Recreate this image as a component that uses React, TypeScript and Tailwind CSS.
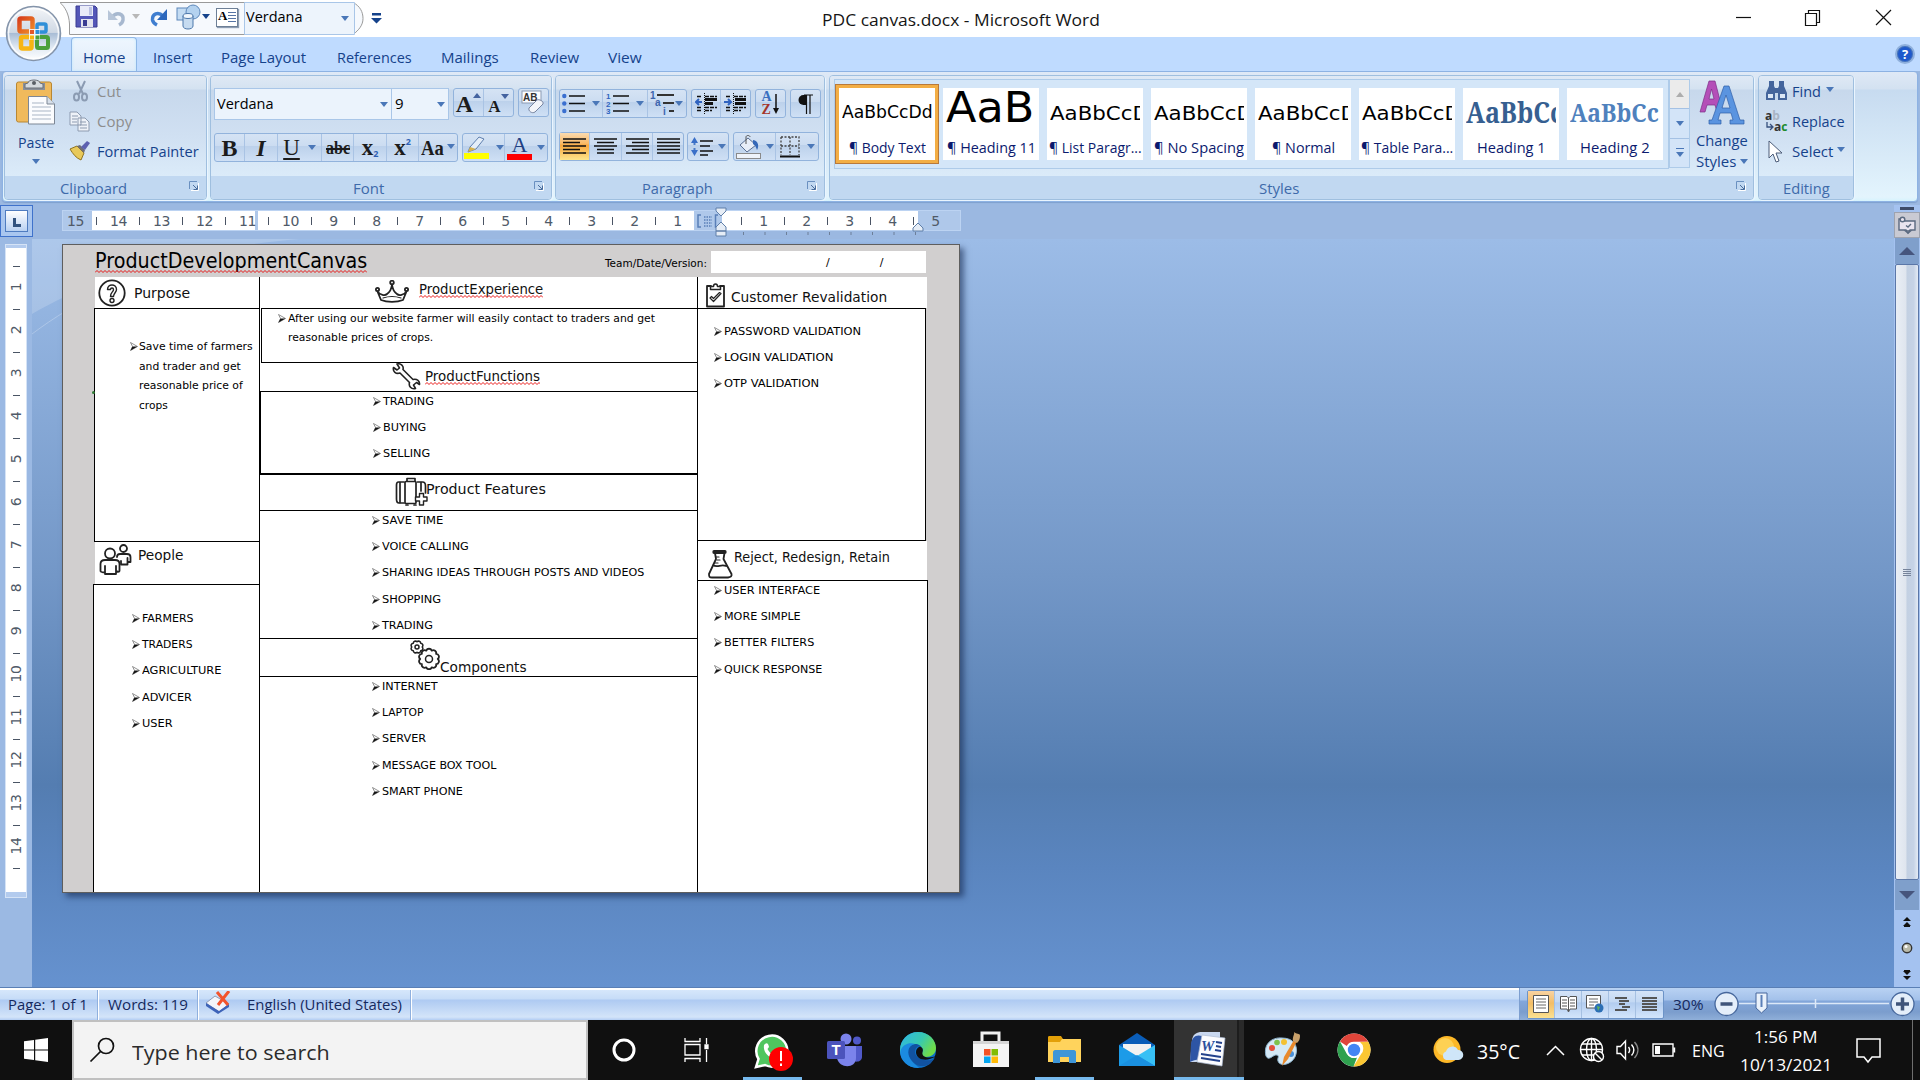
import { useLayoutEffect, useRef, useState, type ReactNode } from "react";
import clsx from "clsx";

/* Single line of text condensed or widened to an exact width. */
function Fit({ w, children, className }: { w: number; children: ReactNode; className?: string }) {
  const ref = useRef<HTMLSpanElement>(null);
  const [s, setS] = useState(1);
  useLayoutEffect(() => {
    const el = ref.current;
    if (el && el.offsetWidth > 0) setS(w / el.offsetWidth);
  }, [w]);
  return (
    <span className={clsx("inline-block shrink-0 whitespace-nowrap text-left", className)} style={{ width: w }}>
      <span ref={ref} className="inline-block origin-left" style={{ transform: `scaleX(${s})` }}>
        {children}
      </span>
    </span>
  );
}

function Caret({ className, color = "#4a77b8" }: { className?: string; color?: string }) {
  return (
    <svg className={clsx("shrink-0", className)} width="8" height="5" viewBox="0 0 8 5">
      <path d="M0 0H8L4 5Z" fill={color} />
    </svg>
  );
}

/* ---------- Title bar ---------- */

function OfficeButton() {
  return (
    <svg className="absolute left-[5px] top-[5px] z-20" width="58" height="58" viewBox="0 0 58 58">
      <defs>
        <linearGradient id="orb" x1="0" y1="0" x2="0" y2="1">
          <stop offset="0" stopColor="#f4f6f9" />
          <stop offset=".48" stopColor="#cfd8e4" />
          <stop offset=".5" stopColor="#a9bdd6" />
          <stop offset=".75" stopColor="#dfe8f2" />
          <stop offset="1" stopColor="#ffffff" />
        </linearGradient>
        <linearGradient id="og" x1="0" y1="0" x2="1" y2="1">
          <stop offset="0" stopColor="#d8401c" />
          <stop offset="1" stopColor="#f08a28" />
        </linearGradient>
      </defs>
      <circle cx="28.500" cy="28.500" r="27" fill="url(#orb)" stroke="#8494aa" strokeWidth="1.500" />
      <circle cx="28.500" cy="28.500" r="25" fill="none" stroke="#fff" strokeWidth="1.500" opacity=".8" />
      <rect x="14.500" y="13.500" width="13" height="13" rx="1.500" fill="none" stroke="url(#og)" strokeWidth="4.500" />
      <rect x="32" y="19" width="9" height="8" rx="1.500" fill="none" stroke="#2f8fd8" strokeWidth="3.500" />
      <rect x="16" y="32" width="10.500" height="11.500" rx="1.500" fill="none" stroke="#f7b512" strokeWidth="4.500" />
      <rect x="32" y="32" width="11" height="11" rx="1.500" fill="none" stroke="#4ba03c" strokeWidth="4" />
      <path d="M24 24H35V35H24Z" fill="#fff" opacity=".85" />
      <path d="M25 25h4v4h-4z" fill="#e4572a" />
      <path d="M30.500 25h4v4h-4z" fill="#2f8fd8" />
      <path d="M25 30.500h4v4h-4z" fill="#f7b512" />
      <path d="M30.500 30.500h4v4h-4z" fill="#4ba03c" />
    </svg>
  );
}

function TitleBar() {
  return (
    <div className="relative flex h-[37px] bg-white">
      <svg className="absolute left-[59px] top-[2px]" width="306" height="33" viewBox="0 0 306 33">
        <path d="M1 .500H294C301 4 304 10 304 16.500S300 28 294 32.500H10.500V22C10 12 6 5 1 .500Z" fill="#f6f9fd" stroke="#9a9a9a" />
        <path d="M185.500 .500H295.500V32.500H185.500Z" fill="#edf4fc" stroke="#a9c6e8" />
      </svg>
      <div className="relative flex w-[390px] shrink-0 items-start pl-[75px]">
        <svg className="mt-[5px]" width="23" height="23" viewBox="0 0 23 23">
          <path d="M1 1H20L22 3V22H1Z" fill="#5457b8" stroke="#3a3c92" />
          <path d="M5 1H18V11H5Z" fill="#e9ebf8" />
          <path d="M14 2h3v8h-3z" fill="#b9bfe3" />
          <path d="M6 14H18V22H6Z" fill="#e3e4ee" />
          <path d="M8 15h4v6H8z" fill="#3a3c92" />
        </svg>
        <svg className="ml-[9px] mt-[8px]" width="20" height="19" viewBox="0 0 20 19">
          <path d="M5 9C10 3 17 6 16 12C15.500 15 14 16 12 17" fill="none" stroke="#a7b8cf" strokeWidth="3.500" />
          <path d="M1 2V12H11Z" fill="#b7c5d8" />
        </svg>
        <Caret className="ml-[5px] mt-[14px]" color="#b8b8b8" />
        <svg className="ml-[9px] mt-[8px]" width="20" height="19" viewBox="0 0 20 19">
          <path d="M14 8C9 3 3 6 3.500 12C4 15 6 16 8 17" fill="none" stroke="#3f7ed0" strokeWidth="3.500" />
          <path d="M18 1V12H8Z" fill="#2d68bd" />
        </svg>
        <svg className="ml-[7px] mt-[4px]" width="26" height="26" viewBox="0 0 26 26">
          <rect x="1" y="4" width="13" height="12" fill="#c4dcf3" stroke="#5d88bb" />
          <circle cx="17" cy="8" r="7" fill="#b4d2ef" stroke="#5d88bb" />
          <path d="M7 12V22C7 26 17 26 17 22V12Z" fill="#c6dbf0" stroke="#4d78ab" />
          <ellipse cx="12" cy="12" rx="5" ry="2.500" fill="#f1f7fd" stroke="#4d78ab" />
        </svg>
        <Caret className="ml-0 mt-[14px]" color="#15428b" />
        <div className="ml-[6px] mt-[8px] flex h-[19px] w-[22px] border border-[#6d7f96] bg-white shadow-[1px_1px_1px_#8d9db3]">
          <span className="w-[10px] pl-[1px] font-['Liberation_Serif'] text-[13px] font-bold leading-[13px]">A</span>
          <span className="flex flex-1 flex-col gap-[2px] px-[1px] pt-[3px]">
            {[0, 1, 2, 3].map((i) => (
              <i key={i} className="h-px bg-[#5574a5]" />
            ))}
          </span>
        </div>
        <Fit w={57} className="ml-[8px] mt-[6px] text-[15px] leading-[20px] text-black">Verdana</Fit>
        <Caret className="ml-[38px] mt-[16px]" />
        <svg className="ml-[22px] mt-[12px]" width="11" height="12" viewBox="0 0 11 12">
          <path d="M1 1H10V3.500H1ZM0 6H11L5.500 11.500Z" fill="#15428b" />
        </svg>
      </div>
      <Fit w={278} className="ml-[432px] mt-[7px] text-[17px] leading-[25px] text-[#151515]">PDC canvas.docx - Microsoft Word</Fit>
      <svg className="ml-auto mr-[28px] mt-[9px] shrink-0" width="157" height="17" viewBox="0 0 157 17" fill="none" stroke="#111" strokeWidth="1.200">
        <path d="M1 8.500H16" />
        <path d="M70.500 4.500H81.500V16.500H70.500ZM73.500 4V1.500H84.500V13.500H82" />
        <path d="M141 1L156 16M156 1L141 16" />
      </svg>
    </div>
  );
}

function Tabs() {
  const tab = "mt-[9px] text-[15px] leading-[22px] text-[#15428b]";
  return (
    <div className="flex h-[34px] bg-[#bfdbff]">
      <div className="ml-[71px] h-[34px] w-[66px] rounded-t-[4px] border border-b-0 border-[#8fb7e6] bg-gradient-to-b from-[#eef6fe] to-[#e0ecf9] pl-[11px] shadow-[inset_0_0_3px_#bfe8ff]">
        <Fit w={42} className="mt-[8px] text-[15px] leading-[22px] text-[#15428b]">Home</Fit>
      </div>
      <Fit w={39} className={clsx(tab, "ml-[16px]")}>Insert</Fit>
      <Fit w={85} className={clsx(tab, "ml-[29px]")}>Page Layout</Fit>
      <Fit w={75} className={clsx(tab, "ml-[31px]")}>References</Fit>
      <Fit w={58} className={clsx(tab, "ml-[29px]")}>Mailings</Fit>
      <Fit w={49} className={clsx(tab, "ml-[31px]")}>Review</Fit>
      <Fit w={34} className={clsx(tab, "ml-[29px]")}>View</Fit>
      <span className="ml-auto mr-[5px] mt-[7px] flex h-[20px] w-[20px] items-center justify-center rounded-full border-2 border-[#8fb0dc] bg-[#1f59cc] text-[13px] font-bold leading-none text-white ring-1 ring-[#4774b8] ring-inset">?</span>
    </div>
  );
}

/* ---------- Ribbon ---------- */

function Launcher({ className }: { className?: string }) {
  return (
    <svg className={className} width="10" height="10" viewBox="0 0 10 10" fill="none" stroke="#6a90c0">
      <path d="M.500 8V.500H8" />
      <path d="M4 4L8 8M8.500 4.500V8.500H4.500" stroke="#4a6d9c" />
      <path d="M9.500 2V9.500H2" stroke="#fff" />
    </svg>
  );
}

function Group({ title, tw, width, children, launcher }: { title: string; tw: number; width: string; children: ReactNode; launcher?: boolean }) {
  return (
    <section className={clsx("flex h-[125px] shrink-0 flex-col overflow-hidden rounded-[4px] border border-[#9fbfdf] shadow-[1px_1px_0_#eaf5ff]", width)}>
      <div className="h-[100px] bg-[linear-gradient(180deg,#dfe9f5_0,#d4e2f1_13px,#c7d8ec_14px,#d0e0f2_60px,#dbebf9_100px)]">{children}</div>
      <div className={clsx("relative flex h-[23px] justify-center bg-[#c1d8f1]", launcher && "pr-[25px]")}>
        <Fit w={tw} className="text-[15px] leading-[24px] text-[#3e6aaa]">{title}</Fit>
        {launcher && <Launcher className="absolute right-[7px] top-[5px]" />}
      </div>
    </section>
  );
}

const btn = "flex h-[29px] rounded-[3px] border border-[#92b3dc] bg-[linear-gradient(180deg,#d5e3f4_0,#cbdcf1_45%,#bcd1eb_46%,#cfe0f5_100%)] divide-x divide-[#a9c3e4]";

function Cell({ w, on, children, className }: { w: string; on?: boolean; children: ReactNode; className?: string }) {
  return (
    <div className={clsx("flex h-full shrink-0 items-center justify-center", w, on && "bg-[linear-gradient(180deg,#fbdbb0_0,#f9b863_40%,#f9a83e_45%,#fde68c_100%)]", className)}>
      {children}
    </div>
  );
}

function Clipboard() {
  return (
    <Group title="Clipboard" tw={67} width="w-[203px]" launcher>
      <div className="flex">
        <div className="flex w-[62px] flex-col items-center pt-[3px]">
          <svg width="42" height="46" viewBox="0 0 42 46">
            <rect x="1.500" y="3" width="35" height="40" rx="2" fill="#f0ba5c" stroke="#b98732" />
            <path d="M8 4H30V11H8Z" fill="#8a8f98" />
            <path d="M13 4C13 0 25 0 25 4L28 5V9H10V5Z" fill="#d6dade" stroke="#6b7078" />
            <circle cx="19" cy="4" r="2" fill="#5a5f66" />
            <path d="M13.500 17.500H32L39.500 25V45H13.500Z" fill="#fbfcfe" stroke="#7d8795" />
            <path d="M32 17.500V25H39.500" fill="#d7dfe9" stroke="#7d8795" />
            <path d="M17 24H29M17 28H36M17 32H36M17 36H36M17 40H36" stroke="#a9b5c5" />
          </svg>
          <Fit w={36} className="mt-[6px] text-[15px] leading-[22px] text-[#15428b]">Paste</Fit>
          <Caret className="mt-[6px]" />
        </div>
        <div className="flex flex-col pl-[2px]">
          <div className="flex h-[30px] items-center">
            <svg className="ml-[3px] mr-[7px]" width="18" height="22" viewBox="0 0 18 22" fill="none" stroke="#8b9bb2" strokeWidth="2">
              <path d="M5 1L11 14M13 1L7 14" />
              <ellipse cx="4.500" cy="17" rx="2.500" ry="3.500" />
              <ellipse cx="12.500" cy="17" rx="2.500" ry="3.500" />
            </svg>
            <Fit w={24} className="text-[15px] leading-[22px] text-[#8d8d8d]">Cut</Fit>
          </div>
          <div className="flex h-[30px] items-center">
            <svg className="mr-[6px]" width="22" height="21" viewBox="0 0 22 21" fill="#eef2f8" stroke="#8d9bb0">
              <path d="M1 1H8L12 5V14H1ZM9 7H16L20 11V20H9Z" />
              <path d="M3 5H9M3 8H8M3 11H8M11 11H17M11 14H18M11 17H18" />
            </svg>
            <Fit w={35} className="text-[15px] leading-[22px] text-[#8d8d8d]">Copy</Fit>
          </div>
          <div className="flex h-[30px] items-center">
            <svg className="mr-[6px]" width="22" height="20" viewBox="0 0 22 20">
              <path d="M1 8L8 5L15 12L12 19C7 17 4 13 1 8Z" fill="#e8c95a" stroke="#8f7320" />
              <path d="M8 5L11 4L16 9L15 12Z" fill="#6f6f78" />
              <path d="M12 6L18 0L21 2L16 9Z" fill="#5d61b0" />
            </svg>
            <Fit w={102} className="text-[15px] leading-[22px] text-[#15428b]">Format Painter</Fit>
          </div>
        </div>
      </div>
    </Group>
  );
}

const serif = "font-['Liberation_Serif',serif] text-[#1c1c1c]";

function FontGroup() {
  return (
    <Group title="Font" tw={31} width="w-[342px]" launcher>
      <div className="flex pl-[3px] pt-[12px]">
        <div className="flex h-[32px] w-[178px] items-center border border-[#a9c6e8] bg-[#ebf3fc] pb-[2px]">
          <Fit w={57} className="ml-[2px] text-[15px] leading-[28px] text-black">Verdana</Fit>
          <Caret className="ml-auto mr-[3px] mt-[2px]" />
        </div>
        <div className="flex h-[32px] w-[57px] items-center border border-l-0 border-[#a9c6e8] bg-[#ebf3fc] pb-[2px]">
          <span className="ml-[3px] text-[15px] leading-[28px] text-black">9</span>
          <Caret className="ml-auto mr-[3px] mt-[2px]" />
        </div>
        <div className={clsx(btn, "ml-[4px]")}>
          <Cell w="w-[30px]">
            <span className={clsx(serif, "pt-[3px] text-[24px] font-bold leading-none")}>A</span>
            <svg className="mb-[14px]" width="8" height="5"><path d="M0 5H8L4 0Z" fill="#4463a0" /></svg>
          </Cell>
          <Cell w="w-[29px]">
            <span className={clsx(serif, "pt-[7px] text-[17px] font-bold leading-none")}>A</span>
            <Caret className="mb-[13px]" color="#4463a0" />
          </Cell>
        </div>
        <div className={clsx(btn, "ml-[4px]")}>
          <Cell w="w-[29px]">
            <svg width="25" height="25" viewBox="0 0 25 25">
              <rect x="1" y="1" width="19" height="12" fill="#fafcff" stroke="#8c9bb3" />
              <text x="2" y="11" fontSize="10" fontWeight="bold" fontFamily="Liberation Sans" fill="#333">AB</text>
              <path d="M8 18L16 10C18 9 23 11 22 14L14 22C11 24 7 21 8 18Z" fill="#f3f5fa" stroke="#7784a0" />
            </svg>
          </Cell>
        </div>
      </div>
      <div className="flex pl-[3px] pt-[13px]">
        <div className={btn}>
          <Cell w="w-[30px]"><span className={clsx(serif, "text-[24px] font-bold leading-none")}>B</span></Cell>
          <Cell w="w-[33px]"><span className={clsx(serif, "text-[24px] font-bold italic leading-none")}>I</span></Cell>
          <Cell w="w-[44px]">
            <span className={clsx(serif, "mr-[8px] text-[23px] leading-none underline underline-offset-[3px]")}>U</span>
            <Caret />
          </Cell>
          <Cell w="w-[32px]"><Fit w={24} className={clsx(serif, "text-[18px] font-bold leading-none [&>span]:line-through [&>span]:decoration-2")}>abc</Fit></Cell>
          <Cell w="w-[33px]">
            <span className={clsx(serif, "text-[23px] font-bold leading-none")}>x</span>
            <span className="mt-[12px] text-[9px] font-bold leading-none text-[#2d5fb3]">2</span>
          </Cell>
          <Cell w="w-[32px]">
            <span className={clsx(serif, "text-[23px] font-bold leading-none")}>x</span>
            <span className="mb-[13px] text-[9px] font-bold leading-none text-[#2d5fb3]">2</span>
          </Cell>
          <Cell w="w-[38px]">
            <Fit w={23} className={clsx(serif, "mr-[3px] pt-[1px] text-[21px] font-bold leading-none")}>Aa</Fit>
            <Caret className="mb-[2px]" />
          </Cell>
        </div>
        <div className={clsx(btn, "ml-[4px]")}>
          <Cell w="w-[42px]">
            <svg className="mr-[7px]" width="25" height="25" viewBox="0 0 25 25">
              <path d="M6 12L15 2L20 4L12 14L4 17Z" fill="#e4edf8" stroke="#5e7fae" />
              <path d="M4 17L6 12L12 14Z" fill="#d6b14c" />
              <rect y="18" width="25" height="6" fill="#ff0" />
            </svg>
            <Caret />
          </Cell>
          <Cell w="w-[42px]">
            <span className="mr-[5px] flex w-[25px] flex-col items-center">
              <span className="font-['Liberation_Serif'] text-[22px] leading-[19px] text-[#1f3f82]">A</span>
              <span className="h-[6px] w-[25px] bg-[#f00]" />
            </span>
            <Caret />
          </Cell>
        </div>
      </div>
    </Group>
  );
}

function AlignIcon({ d }: { d: string }) {
  return (
    <svg width="23" height="19" viewBox="0 0 23 19" stroke="#111" strokeWidth="1.400">
      <path d={d} />
    </svg>
  );
}

function IndentIcon({ left }: { left?: boolean }) {
  return (
    <svg width="23" height="21" viewBox="0 0 23 21">
      <path d="M2 3.500H7M10 3.500H22M2 14.500H7M2 17.500H7M10 14.500H22M10 17.500H17" stroke="#111" strokeWidth="1.500" strokeDasharray="4 1" />
      <path d={left ? "M10 5H22V8H10ZM10 9H18V12H10Z" : "M11 5H22V8H11ZM11 9H22V12H11Z"} fill="#111" />
      <path d={left ? "M7 9H2M4 6L1 9L4 12" : "M0 9H6M4 6L7 9L4 12"} stroke="#2f63c0" strokeWidth="2" fill="none" />
      <path d="M9.500 0V21" stroke="#111" strokeDasharray="1 1" />
    </svg>
  );
}

function ParagraphGroup() {
  return (
    <Group title="Paragraph" tw={71} width="w-[270px]" launcher>
      <div className="flex pl-[3px] pt-[13px]">
        <div className={btn}>
          <Cell w="w-[43px]">
            <svg className="mr-[7px]" width="23" height="21" viewBox="0 0 23 21">
              <path d="M7 3H23M7 10.500H23M7 18H23" stroke="#111" strokeWidth="1.400" />
              <circle cx="2.300" cy="3" r="2.200" fill="#3a6fd0" /><circle cx="2.300" cy="10.500" r="2.200" fill="#3a6fd0" /><circle cx="2.300" cy="18" r="2.200" fill="#3a6fd0" />
            </svg>
            <Caret />
          </Cell>
          <Cell w="w-[45px]">
            <svg className="mr-[7px]" width="23" height="23" viewBox="0 0 23 23">
              <path d="M7 4H23M7 11.500H23M7 19H23" stroke="#111" strokeWidth="1.400" />
              <g fontFamily="Liberation Sans" fontWeight="bold" fontSize="8" fill="#2f63c0">
                <text x="0" y="7">1</text><text x="0" y="14.500">2</text><text x="0" y="22">3</text>
              </g>
            </svg>
            <Caret />
          </Cell>
          <Cell w="w-[38px]">
            <svg width="25" height="25" viewBox="0 0 25 25">
              <path d="M7 4H24M13 12H24M19 20H24" stroke="#333" strokeWidth="2" />
              <g fontFamily="Liberation Sans" fontWeight="bold" fontSize="10" fill="#3c64ae">
                <text x="0" y="8">1</text><text x="5" y="15">a</text><text x="13" y="24">i</text>
              </g>
            </svg>
            <Caret className="mr-[2px]" />
          </Cell>
        </div>
        <div className={clsx(btn, "ml-[4px]")}>
          <Cell w="w-[29px]"><IndentIcon left /></Cell>
          <Cell w="w-[29px]"><IndentIcon /></Cell>
        </div>
        <div className={clsx(btn, "ml-[4px]")}>
          <Cell w="w-[29px]">
            <span className="flex flex-col font-['Liberation_Serif'] text-[14px] font-bold leading-[12.500px]">
              <span className="text-[#3a6fc0]">A</span>
              <span className="text-[#a5352a]">Z</span>
            </span>
            <svg width="8" height="22" viewBox="0 0 8 22"><path d="M4 1V16" stroke="#111" strokeWidth="1.500" /><path d="M1 15H7L4 21Z" fill="#111" /></svg>
          </Cell>
        </div>
        <div className={clsx(btn, "ml-[4px]")}>
          <Cell w="w-[29px]">
            <svg width="15" height="20" viewBox="0 0 15 20"><path d="M9 1H5.500A5 5 0 0 0 5.500 11H8Z" fill="#111" /><path d="M8.500 1V20M12 1V20M6 1H15" stroke="#111" strokeWidth="1.200" /></svg>
          </Cell>
        </div>
      </div>
      <div className="flex pl-[3px] pt-[14px]">
        <div className={btn}>
          <Cell w="w-[30px]" on><AlignIcon d="M0 2H23M0 5.500H17M0 9H23M0 12.500H17M0 16H23" /></Cell>
          <Cell w="w-[32px]"><AlignIcon d="M0 2H23M3 5.500H20M0 9H23M3 12.500H20M3 16H20" /></Cell>
          <Cell w="w-[31px]"><AlignIcon d="M0 2H23M6 5.500H23M0 9H23M6 12.500H23M0 16H23" /></Cell>
          <Cell w="w-[30px]"><AlignIcon d="M0 2H23M0 5.500H23M0 9H23M0 12.500H23M0 16H23" /></Cell>
        </div>
        <div className={clsx(btn, "ml-[3px]")}>
          <Cell w="w-[40px]">
            <svg className="mr-[5px]" width="22" height="20" viewBox="0 0 22 20">
              <path d="M9 4H22M9 9H19M9 14H22M9 18H17" stroke="#111" strokeWidth="1.400" />
              <path d="M3.500 3V17" stroke="#4a7bc8" strokeWidth="2" strokeDasharray="5 3" />
              <path d="M0 6L3.500 0L7 6ZM0 13L3.500 19L7 13Z" fill="#3a6fc8" />
            </svg>
            <Caret />
          </Cell>
        </div>
        <div className={clsx(btn, "ml-[4px]")}>
          <Cell w="w-[42px]">
            <svg className="mr-[5px]" width="25" height="24" viewBox="0 0 25 24">
              <path d="M4 10L12 3L20 10L11 17Z" fill="#e8eef8" stroke="#5a6f92" />
              <path d="M10 9V2C10 0 14 0 14 2" fill="none" stroke="#555" />
              <path d="M17 5C23 6 23 12 21 15C20 12 19 10 17 9Z" fill="#3568b8" />
              <rect x=".500" y="18.500" width="24" height="5" fill="#eef3fa" stroke="#8a8a8a" />
            </svg>
            <Caret />
          </Cell>
          <Cell w="w-[42px]">
            <svg className="mr-[7px]" width="20" height="22" viewBox="0 0 20 22">
              <path d="M1 1H19V19M1 1V19M10 1V19M1 10H19" fill="none" stroke="#444" strokeDasharray="2 1.500" strokeWidth="1.300" />
              <path d="M0 20.500H20" stroke="#111" strokeWidth="2" />
            </svg>
            <Caret />
          </Cell>
        </div>
      </div>
    </Group>
  );
}

const dj = "font-['DejaVu_Sans',sans-serif]";
const styleItems = [
  { n: "¶ Body Text", nw: 77, s: "AaBbCcDd", sw: 91, cls: "text-[17px] leading-[48px] text-black", f: "sans", on: true },
  { n: "¶ Heading 11", nw: 89, s: "AaB", sw: 88, cls: "text-[43px] leading-[38px] text-black", f: "sans" },
  { n: "¶ List Paragr...", nw: 93, s: "AaBbCcDd", sw: 112, cls: "text-[20px] leading-[50px] text-black", f: "sans" },
  { n: "¶ No Spacing", nw: 90, s: "AaBbCcDd", sw: 112, cls: "text-[20px] leading-[50px] text-black", f: "sans" },
  { n: "¶ Normal", nw: 63, s: "AaBbCcDd", sw: 112, cls: "text-[20px] leading-[50px] text-black", f: "sans" },
  { n: "¶ Table Para...", nw: 92, s: "AaBbCcDd", sw: 112, cls: "text-[20px] leading-[50px] text-black", f: "sans" },
  { n: "Heading 1", nw: 69, s: "AaBbCc", sw: 97, cls: "text-[28px] leading-[48px] font-bold text-[#365f91]", f: "serif" },
  { n: "Heading 2", nw: 70, s: "AaBbCc", sw: 89, cls: "text-[25px] leading-[48px] font-bold text-[#4f81bd]", f: "serif" },
];

function StylesGroup() {
  return (
    <Group title="Styles" tw={40} width="w-[925px]" launcher>
      <div className="flex pt-[3px]">
        <div className="ml-[4px] flex h-[90px] w-[835px] gap-[8px] border border-[#aecbe9] bg-[#d4e6f8] pl-[4px] pt-[8px]">
          {styleItems.map((it) => (
            <div
              key={it.n}
              className={clsx(
                "flex h-[72px] w-[96px] shrink-0 flex-col items-center bg-white",
                it.on && "outline-[3px] outline-[#f3ae45] shadow-[0_0_0_4px_#b9793a]",
              )}
            >
              <div className={clsx("h-[48px] w-[90px] overflow-hidden", it.f === "serif" ? "font-['Noto_Serif','Liberation_Serif',serif]" : dj)}>
                <Fit w={it.sw} className={it.cls}>{it.s}</Fit>
              </div>
              <Fit w={it.nw} className="text-[15px] leading-[22px] text-[#0b1a6e]">{it.n}</Fit>
            </div>
          ))}
        </div>
        <div className="flex h-[89px] w-[21px] flex-col divide-y divide-[#a4c1e4] border border-[#aecbe9] bg-[#d3e4f8]">
          <span className="flex flex-1 items-center justify-center bg-[#ebebeb]"><svg width="8" height="5"><path d="M0 5H8L4 0Z" fill="#adadad" /></svg></span>
          <span className="flex flex-1 items-center justify-center"><Caret /></span>
          <span className="flex flex-1 flex-col items-center justify-center gap-[3px]"><i className="h-[1px] w-[8px] bg-[#4a77b8]" /><Caret /></span>
        </div>
        <div className="flex flex-col pl-[6px] pt-[1px]">
          <svg className="ml-[3px]" width="46" height="45" viewBox="0 0 46 45">
            <path fillRule="evenodd" d="M1 32L10 1H16L24 32H18L16 25H8L6 32ZM10 19H15L12.500 9Z" fill="#b44fb8" stroke="#7c2f86" strokeWidth=".700" />
            <path fillRule="evenodd" d="M10 44V40H13L25 6H30L41 40H45V44H31V40H34L32 33H21L19 40H22V44ZM23 28H31L27 15Z" fill="#5a94e0" stroke="#2f5fa8" strokeWidth=".700" />
          </svg>
          <Fit w={52} className="mt-[5px] text-[15px] leading-[21px] text-[#15428b]">Change</Fit>
          <span className="flex items-center">
            <Fit w={40} className="text-[15px] leading-[21px] text-[#15428b]">Styles</Fit>
            <Caret className="ml-[4px]" />
          </span>
        </div>
      </div>
    </Group>
  );
}

function EditingGroup() {
  const t = "text-[15px] leading-[22px] text-[#15428b]";
  return (
    <Group title="Editing" tw={47} width="w-[96px]">
      <div className="flex flex-col pl-[6px]">
        <div className="flex h-[30px] items-center">
          <svg className="mr-[4px]" width="23" height="22" viewBox="0 0 23 22" fill="#44659c">
            <path d="M4 1H9V6L10 8V20H1V13L4 6ZM14 1H19V6L22 13V20H13V8L14 6Z" /><path d="M9 8H14V13H9Z" /><path d="M3 14H8V18H3ZM15 14H20V18H15Z" fill="#dbe7f6" />
          </svg>
          <Fit w={29} className={t}>Find</Fit>
          <Caret className="mb-[4px] ml-[5px]" />
        </div>
        <div className="flex h-[30px] items-center">
          <span className="mr-[4px] flex w-[23px] flex-col text-[12px] font-bold leading-[11px] text-[#333]">
            <span>a<span className="text-[#a9b4c4]">b</span></span>
            <span className="flex pl-[1px]">
              <svg width="8" height="11" viewBox="0 0 8 11"><path d="M1 1V6H6M4 3L7 6L4 9" fill="none" stroke="#36507d" strokeWidth="1.300" /></svg>
              a<span className="text-[#1b8c2d]">c</span>
            </span>
          </span>
          <Fit w={53} className={t}>Replace</Fit>
        </div>
        <div className="flex h-[30px] items-center">
          <svg className="ml-[3px] mr-[7px]" width="17" height="23" viewBox="0 0 17 23"><path d="M1 1V18L5 14L8 22L11 21L8 13H14Z" fill="#fff" stroke="#4c5c78" /></svg>
          <Fit w={41} className={t}>Select</Fit>
          <Caret className="mb-[4px] ml-[4px]" />
        </div>
      </div>
    </Group>
  );
}

function Ribbon() {
  return (
    <div className="h-[134px] bg-[#9bb8e1]">
      <div className="mx-[2px] flex h-[131px] rounded-[4px] border border-[#8db2e3] bg-[linear-gradient(180deg,#dfe9f6_0,#d3e1f1_17px,#c7dbf0_18px,#e3f4fd_125px,#d3f3fd_130px)] pl-px pt-[3px] shadow-[0_1px_1px_#7fa0cf]">
        <Clipboard />
        <span className="w-[3px]" />
        <FontGroup />
        <span className="w-[3px]" />
        <ParagraphGroup />
        <span className="w-[4px]" />
        <StylesGroup />
        <span className="w-[4px]" />
        <EditingGroup />
      </div>
    </div>
  );
}

/* ---------- Rulers ---------- */

const hNums = ["15", "14", "13", "12", "11", "10", "9", "8", "7", "6", "5", "4", "3", "2", "1", "", "1", "2", "3", "4", "5"];

function HRuler() {
  return (
    <div className="flex h-[34px] bg-[#9bb8e1]">
      <div className="h-[32px] w-[33px] border border-[#3f72cb] bg-[#a9c6ef] p-[4px]">
        <div className="flex h-[22px] w-[23px] items-center justify-center border border-[#4f7cc0] bg-gradient-to-b from-white to-[#b9d1f2]">
          <span className="mt-[2px] h-[9px] w-[8px] border-b-[3px] border-l-[3px] border-[#31527f]" />
        </div>
      </div>
      <div className="relative ml-[29px] mt-[5px] flex h-[21px] w-[899px] border border-[#bcd3f2] bg-[#afc8ea]">
        <span className="w-[29px]" />
        <span className="w-[163px] bg-white" />
        <span className="w-[3px]" />
        <span className="w-[436px] bg-white" />
        <span className="flex w-[28px] items-center justify-center">
          <svg width="22" height="14" viewBox="0 0 22 14" fill="none" stroke="#5a7fb8">
            <path d="M4 1H1V13H4" strokeWidth="1.500" />
            <path d="M7 3H15M7 6H15M7 9H15M7 12H15" strokeDasharray="1.500 1" strokeWidth="1.500" />
            <path d="M21 1H18.500V13H21" strokeWidth="1.500" />
          </svg>
        </span>
        <span className="w-[196px] bg-white" />
        <div className="absolute left-[-9px] top-0 flex h-[19px] items-center">
          {hNums.map((n, i) => (
            <span key={i} className="relative flex h-[14px] w-[43px] items-center justify-center font-['DejaVu_Sans'] text-[14px] leading-none tracking-[-0.5px] text-[#505a68]">
              {n}
              {i !== 14 && i < 20 && <i className="absolute right-0 top-[3px] h-[8px] w-px bg-[#4a5464]" />}
            </span>
          ))}
        </div>
        <svg className="absolute left-[652px] top-[-4px]" width="12" height="31" viewBox="0 0 12 31" fill="#e6edf6" stroke="#5f7fa9">
          <path d="M1 1H11V4L6 9L1 4ZM1 24V20L6 15L11 20V24ZM1 24H11V29H1Z" />
        </svg>
        <svg className="absolute left-[849px] top-[11px]" width="12" height="10" viewBox="0 0 12 10" fill="#e6edf6" stroke="#5f7fa9">
          <path d="M1 9V6L6 1L11 6V9Z" />
        </svg>
        <svg className="absolute left-[680px] top-[21px]" width="175" height="3" viewBox="0 0 175 3" stroke="#6d7f99">
          <path d="M.500 0V3M22 0V3M43.500 0V3M65 0V3M86.500 0V3M108 0V3M129.500 0V3M151 0V3M172.500 0V3" />
        </svg>
      </div>
    </div>
  );
}

function VRuler() {
  return (
    <div className="flex w-[32px] shrink-0 items-start bg-[#9bb9e3] pl-[5px] pt-[5px]">
      <div className="flex h-[654px] w-[22px] flex-col border border-[#d5e3f6] bg-[#b3cbee] pb-[5px] pt-[3px]">
        <div className="flex min-h-0 flex-1 flex-col items-center overflow-hidden bg-white pt-[18px]">
          {Array.from({ length: 15 }, (_, i) => (
            <span key={i} className="flex h-[43px] w-full shrink-0 flex-col items-center">
              <i className="h-px w-[7px] shrink-0 bg-[#4a5464]" />
              {i < 14 && (
                <span className="flex h-[40px] items-center justify-center">
                  <span className="-rotate-90 font-['DejaVu_Sans'] text-[14px] leading-none tracking-[-0.5px] text-[#505a68]">{i + 1}</span>
                </span>
              )}
            </span>
          ))}
        </div>
      </div>
    </div>
  );
}

/* ---------- Document ---------- */

function Arrow() {
  return (
    <svg className="mt-[2px] shrink-0" width="8" height="9" viewBox="0 0 8 9">
      <path d="M.500 .500L7.500 4.500L.500 8.500L2.500 4.500Z" fill="none" stroke="#777" strokeWidth=".800" />
      <path d="M2.500 4.500H7.500L.500 8.500Z" fill="#111" />
    </svg>
  );
}

type Item = [string, number];

function List({ items, gap, className }: { items: Item[]; gap: string; className: string }) {
  return (
    <ul className={clsx("flex flex-col gap-[12.200px]", className)}>
      {items.map(([t, w]) => (
        <li key={t} className={clsx("flex h-[14px]", gap)}>
          <Arrow />
          <Fit w={w} className="text-[11px] leading-[14px] text-black">{t}</Fit>
        </li>
      ))}
    </ul>
  );
}

/* Closed outline of a toothed wheel with rounded lobes. */
function scallop(cx: number, cy: number, r: number, n: number) {
  const pts = Array.from({ length: n }, (_, i) => {
    const a = (i * 2 * Math.PI) / n;
    return `${(cx + r * Math.cos(a)).toFixed(2)} ${(cy + r * Math.sin(a)).toFixed(2)}`;
  });
  const lobe = ((Math.PI * r) / n) * 1.05;
  return `M${pts[0]}` + [...pts.slice(1), pts[0]].map((p) => `A${lobe.toFixed(2)} ${lobe.toFixed(2)} 0 0 1 ${p}`).join("");
}

const body = "text-[11px] leading-[14px] text-black";
const head = "text-[14px] leading-[20px] text-[#111]";
const line = { fill: "none", stroke: "#222", strokeWidth: 2, strokeLinejoin: "round", strokeLinecap: "round" } as const;

/* Text with the fine red zigzag of the spelling checker below it. */
function Misspelt({ w, className, zig, children }: { w: number; className: string; zig: string; children: ReactNode }) {
  const d = "M0 2.500" + Array.from({ length: Math.ceil(w / 2) }, (_, i) => `L${(i + 1) * 2} ${i % 2 ? 2.5 : 0.5}`).join("");
  return (
    <span className={clsx("relative inline-block shrink-0", className)}>
      <Fit w={w}>{children}</Fit>
      <svg className={clsx("absolute left-0", zig)} width={w} height="3" fill="none" stroke="#e80000" strokeWidth=".900">
        <path d={d} />
      </svg>
    </span>
  );
}

function LeftColumn() {
  return (
    <div className="flex w-[166px] shrink-0 flex-col">
      <div className="ml-[2px] flex h-[31px] bg-white pl-[3px]">
        <svg className="mt-[2px]" width="28" height="28" viewBox="0 0 28 28" {...line} strokeWidth="1.800">
          <circle cx="14" cy="14" r="12.700" />
          <path d="M9.500 10.500C9.500 4.500 18.500 4.500 18.500 10.500C18.500 13.500 15.500 14 15.500 17.500H12.500C12.500 13 15.500 13 15.500 10.500C15.500 8.500 12.500 8.500 12.500 10.500Z" strokeWidth="1.400" />
          <circle cx="14" cy="21.500" r="2" strokeWidth="1.400" />
        </svg>
        <Fit w={56} className={clsx(head, "ml-[8px] mt-[6px]")}>Purpose</Fit>
      </div>
      <div className="ml-px flex h-[234px] flex-col border-y border-l border-black bg-white pl-[35px] pt-[31px]">
        <div className="flex gap-px">
          <Arrow />
          <div className="flex flex-col gap-[5.700px]">
            <Fit w={114} className={body}>Save time of farmers</Fit>
            <Fit w={102} className={body}>and trader and get</Fit>
            <Fit w={104} className={body}>reasonable price of</Fit>
            <Fit w={29} className={body}>crops</Fit>
          </div>
        </div>
      </div>
      <div className="ml-[2px] flex h-[42px] bg-white pl-[4px]">
        <svg className="mt-[2px]" width="33" height="32" viewBox="0 0 33 32" {...line} strokeWidth="1.800">
          <circle cx="11" cy="9.500" r="5" />
          <circle cx="24.500" cy="4.500" r="3.500" />
          <path d="M1.500 27V20C1.500 17 3 16 6 16H16C19 16 20.500 17 20.500 20V27C20.500 28 18 28 17 27V22M17 27V30H6V22M6 28C5 29 1.500 28 1.500 27" />
          <path d="M18 13C18 10.500 19 10 21 10H28C30.500 10 31.500 11 31.500 13V18H28.500V14M28.500 18V20.500H22V17" />
        </svg>
        <Fit w={46} className={clsx(head, "ml-[6px] mt-[3px]")}>People</Fit>
      </div>
      <div className="flex-1 border-l border-t border-black bg-white">
        <List className="pl-[38px] pt-[27px]" gap="gap-[2px]" items={[["FARMERS", 52], ["TRADERS", 51], ["AGRICULTURE", 79], ["ADVICER", 50], ["USER", 31]]} />
      </div>
    </div>
  );
}

function MiddleColumn() {
  return (
    <div className="flex w-[439px] shrink-0 flex-col border-x border-black bg-white">
      <div className="flex h-[31px] pl-[115px]">
        <svg className="mt-[3px]" width="34" height="23" viewBox="0 0 34 23" {...line} strokeWidth="1.800">
          <path d="M6 20L2.500 11.500C5 15 10 16 12 14C15 12 16.500 9 17 4.500C17.500 9 19 12 22 14C24 16 29 15 31.500 11.500L28 20C22 22.500 12 22.500 6 20Z" />
          <path d="M8 18C14 16 20 16 26 18" strokeWidth="1.200" />
          <circle cx="2.500" cy="9.500" r="1.600" /><circle cx="17" cy="2.500" r="1.800" /><circle cx="31.500" cy="9.500" r="1.600" />
        </svg>
        <Misspelt w={124} className={clsx(head, "ml-[10px] mt-[2px] h-[20px]")} zig="top-[16px]">ProductExperience</Misspelt>
      </div>
      <div className="ml-px flex h-[55px] gap-[2px] border-y border-l border-black pl-[16px] pt-[3px]">
        <Arrow />
        <div className="flex flex-col gap-[5px]">
          <Fit w={367} className={body}>After using our website farmer will easily contact to traders and get</Fit>
          <Fit w={145} className={body}>reasonable prices of crops.</Fit>
        </div>
      </div>
      <div className="flex h-[28px] pl-[132px]">
        <svg width="29" height="27" viewBox="0 0 29 27" {...line} strokeWidth="1.600">
          <path d="M5 1C9 0 12 3 11 6.500L21 16.500C25 15.500 28 18 27.500 21.500L24.500 19.500L21.500 22L23.500 25.500C19 26.500 16.500 23 17.500 19.500L8 10C4 11.500 .500 8.500 1.500 4.500L5 7L7.500 5Z" />
        </svg>
        <Misspelt w={115} className={clsx(head, "ml-[4px] mt-[3px] h-[20px]")} zig="top-[16px]">ProductFunctions</Misspelt>
      </div>
      <div className="h-[84px] border-b-2 border-l border-t border-black">
        <List className="pl-[112px] pt-[3px]" gap="gap-[2px]" items={[["TRADING", 51], ["BUYING", 43], ["SELLING", 47]]} />
      </div>
      <div className="flex h-[35px] pl-[135px]">
        <svg className="mt-[2px] shrink-0" width="33" height="30" viewBox="0 0 33 30" {...line} strokeWidth="1.700">
          <path d="M9 5H3.500Q1.500 5 1.500 8V22Q1.500 26 4 26H9" />
          <path d="M5 5.500V25.500" />
          <rect x="10" y="4.500" width="11" height="22" rx="1" />
          <path d="M12 4V1.500H20V4" />
          <path d="M22.500 5H27.500Q30.500 5 30.500 9V16" />
          <path d="M26 5.500V14" />
          <path d="M11 28H13M19 28H21" />
          <path d="M24.500 16.500H28.500V20H32V24H28.500V28H24.500V24H20.500V20H24.500Z" fill="#fff" strokeWidth="1.400" />
        </svg>
        <Fit w={120} className={clsx(head, "-ml-[2px] mt-[4px]")}>Product Features</Fit>
      </div>
      <div className="h-[128px] border-t border-black">
        <List className="pl-[112px] pt-[3px]" gap="gap-[2px]" items={[["SAVE TIME", 61], ["VOICE CALLING", 87], ["SHARING IDEAS THROUGH POSTS AND VIDEOS", 262], ["SHOPPING", 59], ["TRADING", 51]]} />
      </div>
      <div className="flex h-[38px] border-t border-black pl-[150px]">
        <svg className="mt-px shrink-0" width="30" height="30" viewBox="0 0 30 30" {...line} strokeWidth="1.500">
          <path d={scallop(7, 7, 5.2, 8)} /><circle cx="7" cy="7" r="2" />
          <path d={scallop(19, 19, 8.8, 10)} strokeWidth="1.800" /><circle cx="19" cy="19" r="3.500" />
        </svg>
        <Fit w={87} className={clsx(head, "mt-[18px]")}>Components</Fit>
      </div>
      <div className="flex-1 border-t border-black">
        <List className="pl-[112px] pt-[3px]" gap="gap-[2px]" items={[["INTERNET", 56], ["LAPTOP", 42], ["SERVER", 44], ["MESSAGE BOX TOOL", 114], ["SMART PHONE", 81]]} />
      </div>
    </div>
  );
}

function RightColumn() {
  return (
    <div className="flex w-[230px] shrink-0 flex-col">
      <div className="flex h-[31px] w-[229px] bg-white pl-[7px]">
        <svg className="mt-[5px]" width="21" height="26" viewBox="0 0 21 26" {...line} strokeWidth="1.800">
          <path d="M6 4H2V24.500H19V4H15" />
          <path d="M5.500 7.500V4.500H8.500C8.500 1 12.500 1 12.500 4.500H15.500V7.500Z" strokeWidth="1.500" />
          <path d="M5 16L8.500 19.500L16 11.500L14.500 10.500L8.500 16.500L6.500 14.500Z" strokeWidth="1.200" />
        </svg>
        <Fit w={156} className={clsx(head, "ml-[5px] mt-[10px]")}>Customer Revalidation</Fit>
      </div>
      <div className="h-[233px] w-[228px] border-y border-r border-black bg-white">
        <List className="pl-[16px] pt-[16px]" gap="gap-[2px]" items={[["PASSWORD VALIDATION", 137], ["LOGIN VALIDATION", 109], ["OTP VALIDATION", 95]]} />
      </div>
      <div className="flex h-[39px] w-[229px] bg-white pl-[10px]">
        <svg className="mt-[8px]" width="25" height="30" viewBox="0 0 25 30" {...line} strokeWidth="1.800">
          <path d="M6 2C5 2 5 4 6 4H17C18 4 18 2 17 2ZM7 4L8 10L1 25C1 28 1.500 28.500 4 28.500H20C23 28 24 27 23.500 25L15.500 10L16.500 4M5 16C9 19 13 15 18 17" />
          <path d="M8 8H11M9 11H12M7 14H10" strokeWidth="1.200" />
        </svg>
        <Fit w={156} className={clsx(head, "ml-px mt-[6px]")}>Reject, Redesign, Retain</Fit>
      </div>
      <div className="flex-1 border-r border-t border-black bg-white">
        <List className="pl-[16px] pt-[3px]" gap="gap-[2px]" items={[["USER INTERFACE", 96], ["MORE SIMPLE", 77], ["BETTER FILTERS", 90], ["QUICK RESPONSE", 98]]} />
      </div>
    </div>
  );
}

function Page() {
  return (
    <div className={clsx("relative ml-[30px] mt-[5px] flex h-[649px] w-[898px] shrink-0 flex-col border border-[#5e5e5e] bg-[#d1cfcf] shadow-[4px_4px_6px_rgba(20,40,80,0.6)]", dj)}>
      <div className="flex h-[32px]">
        <Misspelt w={272} className="ml-[32px] mt-[2px] h-[28px] text-[21.500px] leading-[28px] text-black" zig="top-[23px]">ProductDevelopmentCanvas</Misspelt>
        <Fit w={102} className={clsx(body, "ml-[238px] mt-[12px]")}>Team/Date/Version:</Fit>
        <div className={clsx(body, "ml-[4px] mt-[6px] flex h-[22px] w-[215px] bg-white pt-[5px]")}>
          <span className="ml-[115px]">/</span>
          <span className="ml-[50px]">/</span>
        </div>
      </div>
      <div className="flex flex-1 pl-[30px]">
        <LeftColumn />
        <MiddleColumn />
        <RightColumn />
      </div>
      <i className="absolute left-[29px] top-[146px] h-[3px] w-[3px] rounded-full bg-[#2f7a35]" />
    </div>
  );
}

function ScrollColumn() {
  return (
    <div className="flex w-[26px] shrink-0 flex-col items-center bg-[#a4c2f0]">
      <div className="mt-[2px] h-[3px] w-[14px] bg-[#3e4c68]" />
      <div className="mt-[2px] flex h-[26px] w-full items-center justify-center border border-[#9ea3af] bg-[#c9cad3]">
        <svg width="20" height="20" viewBox="0 0 20 20" fill="#e9e4ef" stroke="#5b6a80" strokeWidth="1.400">
          <path d="M2 4H6L8 6H18V15H13L11 18L9 15H2Z" /><circle cx="5.500" cy="4.500" r="2.300" /><path d="M9 10.500L11 12L14 9" fill="none" /><path d="M11 18L8.500 16H13.500Z" />
        </svg>
      </div>
      <div className="flex h-[26px] w-[24px] items-center justify-center bg-[#7f9fcb]"><svg width="16" height="8"><path d="M0 8H16L8 0Z" fill="#46557d" /></svg></div>
      <div className="flex h-[616px] w-[24px] flex-col items-center justify-center gap-px rounded-[2px] border border-[#5b77a8] bg-[linear-gradient(90deg,#e9eef5_0,#dfe5ee_45%,#c3d0e2_50%,#c6d3e6_80%,#e4ebf5_100%)]">
        {[0, 1, 2, 3].map((i) => (
          <i key={i} className="h-px w-[8px] bg-[#76839a]" />
        ))}
      </div>
      <div className="flex h-[30px] w-[24px] items-center justify-center bg-[#7f9fcb]"><svg width="16" height="8"><path d="M0 0H16L8 8Z" fill="#46557d" /></svg></div>
      <svg className="mt-[7px]" width="10" height="11" viewBox="0 0 10 11"><path d="M5 0L9 4H1ZM5 5L9 9H1ZM2 9H8V10H2Z" fill="#111" /></svg>
      <svg className="mt-[14px]" width="12" height="12" viewBox="0 0 12 12"><circle cx="6" cy="6" r="4.700" fill="#b9b9a8" stroke="#333" strokeWidth="1.400" /><circle cx="5" cy="4.500" r="1.500" fill="#fff" /></svg>
      <svg className="mt-[15px]" width="10" height="11" viewBox="0 0 10 11"><path d="M5 11L9 7H1ZM5 6L9 2H1ZM2 1H8V2H2Z" fill="#111" /></svg>
    </div>
  );
}

function Workspace() {
  return (
    <div className="flex h-[782px]">
      <div className="flex min-w-0 flex-1 flex-col">
        <HRuler />
        <div className="flex flex-1">
          <VRuler />
          <div className="relative flex flex-1 items-start overflow-hidden bg-[linear-gradient(180deg,#9cbce7_0,#7397c7_45%,#547db1_73%,#5a85bf_84%,#6692cf_100%)]">
            <svg className="absolute left-0 top-0" width="270" height="110" viewBox="0 0 270 110">
              <path d="M0 75C60 40 150 10 268 0H0Z" fill="#fff" opacity=".18" />
              <path d="M0 95C20 80 50 60 80 50" stroke="#fff" opacity=".25" fill="none" />
            </svg>
            <Page />
          </div>
        </div>
      </div>
      <ScrollColumn />
    </div>
  );
}

/* ---------- Status bar ---------- */

function Sep() {
  return <i className="h-[30px] w-[2px] shrink-0 border-l border-[#8fb0de] bg-white" />;
}

function StatusBar() {
  const t = "text-[15px] leading-[28px] text-[#15295e]";
  return (
    <div className="flex h-[33px] border-t border-[#5a7fb5] bg-[#b5cff5]">
      <div className="flex flex-1 border-t-2 border-white bg-[linear-gradient(180deg,#d6e7fb_0,#c6dcf7_9px,#aecaf2_10px,#d3e4f9_27px,#b3cdf3_30px)]">
        <Fit w={80} className={clsx(t, "ml-[8px]")}>Page: 1 of 1</Fit>
        <span className="w-[9px]" /><Sep />
        <Fit w={80} className={clsx(t, "ml-[9px]")}>Words: 119</Fit>
        <span className="w-[9px]" /><Sep />
        <svg className="ml-[6px] mt-[1px]" width="26" height="24" viewBox="0 0 26 24">
          <path d="M1 12L10 5L24 13L14 21Z" fill="#f3f5fa" stroke="#8f9cb6" />
          <path d="M1 12L1 15L13 23L24 16V13L14 20Z" fill="#3d63b8" />
          <path d="M12 1L23 14M24 0L13 14" stroke="#f2542d" strokeWidth="3" />
        </svg>
        <Fit w={155} className={clsx(t, "ml-[16px]")}>English (United States)</Fit>
        <span className="w-[8px]" /><Sep />
      </div>
      <div className="flex w-[401px] shrink-0 items-center border-l border-[#7d9fd0] bg-[linear-gradient(180deg,#b9d2f3_0,#a3c1ea_12px,#82a6da_13px,#7b9dcd_24px,#8fafd9_32px)] pl-[7px]">
        <div className="flex h-[29px] shrink-0 divide-x divide-[#a5c0e2] rounded-[2px] border border-[#6c93c7] bg-[linear-gradient(180deg,#d4e3f7_0,#c3d8f3_42%,#b2ccef_43%,#d3e5fb_100%)]">
          {[0, 1, 2, 3, 4].map((i) => (
            <span key={i} className={clsx("flex w-[27px] items-center justify-center", i === 0 && "bg-[linear-gradient(180deg,#f8d3a3,#f3bd66_45%,#fbe191)]")}>
              {i === 0 && <svg width="16" height="18" viewBox="0 0 16 18"><path d="M.500 .500H15.500V17.500H.500Z" fill="#fff" stroke="#555" /><path d="M3 4H13M3 7H13M3 10H13M3 13H13" stroke="#666" /></svg>}
              {i === 1 && <svg width="17" height="18" viewBox="0 0 17 18" fill="#fff" stroke="#555"><path d="M.500 1.500H7L8.500 3L10 1.500H16.500V14H10L8.500 17L7 14H.500ZM8.500 3V16" /><path d="M2 5H7M2 8H7M2 11H7M10 5H15M10 8H15M10 11H15" /></svg>}
              {i === 2 && <svg width="18" height="18" viewBox="0 0 18 18"><path d="M.500 .500H14.500V13H.500Z" fill="#fff" stroke="#555" /><path d="M3 4H12M3 7H12M3 10H8" stroke="#666" /><circle cx="13" cy="13" r="4.500" fill="#2c6fb5" /><path d="M11 11L14 12L12 16Z" fill="#5fb55a" /></svg>}
              {i === 3 && <svg width="15" height="16" viewBox="0 0 15 16"><path d="M0 2H12M4 5H14M4 8H10M7 11H15M0 14H12" stroke="#555" strokeWidth="1.800" /></svg>}
              {i === 4 && <svg width="15" height="16" viewBox="0 0 15 16"><path d="M0 2H15M0 5H15M0 8H15M0 11H15M0 14H15" stroke="#555" strokeWidth="1.800" /></svg>}
            </span>
          ))}
        </div>
        <Fit w={31} className={clsx(t, "ml-[9px]")}>30%</Fit>
        <svg className="ml-[9px] shrink-0" width="206" height="28" viewBox="0 0 206 28">
          <path d="M26 13.500H176M102.500 9V18" stroke="#dce8f8" strokeWidth="1.500" />
          <circle cx="13.500" cy="14" r="11.500" fill="#e4eefa" stroke="#46679c" strokeWidth="1.300" />
          <path d="M7.500 14H19.500" stroke="#3f547a" strokeWidth="3.500" />
          <circle cx="189.500" cy="14" r="11.500" fill="#e4eefa" stroke="#46679c" strokeWidth="1.300" />
          <path d="M183 14H196M189.500 7.500V20.500" stroke="#3f547a" strokeWidth="3.500" />
          <path d="M43 3H54V18L48.500 23L43 18Z" fill="#e9f1fb" stroke="#46679c" />
          <path d="M48.500 5V17" stroke="#5a7fb8" strokeWidth="2" />
        </svg>
      </div>
    </div>
  );
}

/* ---------- Taskbar ---------- */

function Slot({ w = "w-[73px]", run, children }: { w?: string; run?: boolean; children: ReactNode }) {
  return (
    <div className={clsx("flex h-[60px] shrink-0 flex-col items-center", w)}>
      <div className="flex h-[57px] items-center pt-[3px]">{children}</div>
      {run && <i className="h-[3px] w-[59px] bg-[#76b9ed]" />}
    </div>
  );
}

function Taskbar() {
  return (
    <div className="flex h-[60px] bg-[#101010] text-white">
      <div className="flex w-[72px] items-center justify-center">
        <svg width="24" height="24" viewBox="0 0 24 24" fill="#fff"><path d="M0 3.300L10 1.900V11.400H0ZM11.200 1.700L24 0V11.400H11.200ZM0 12.600H10V22.100L0 20.700ZM11.200 12.600H24V24L11.200 22.300Z" /></svg>
      </div>
      <div className="flex w-[516px] items-center border-2 border-[#c0c0c0] bg-[#f3f3f3]">
        <svg className="ml-[15px]" width="27" height="26" viewBox="0 0 27 26" fill="none" stroke="#111" strokeWidth="1.700"><circle cx="17" cy="9" r="7.500" /><path d="M11.500 14.500L1.500 24.500" /></svg>
        <Fit w={198} className="ml-[16px] mt-[3px] text-[20.500px] leading-[30px] text-[#2b2b2b]">Type here to search</Fit>
      </div>
      <Slot w="w-[72px]"><svg width="26" height="26"><circle cx="13" cy="13" r="10" fill="none" stroke="#fff" strokeWidth="3" /></svg></Slot>
      <Slot w="w-[72px]">
        <svg width="25" height="24" viewBox="0 0 25 24" fill="none" stroke="#fff" strokeWidth="1.300"><path d="M1 0V3.500H16V0M1 6.500H16V17H1ZM1 24V20.500H16V24M22.500 0V6M22.500 12V24" /><path d="M21 7H24V10.500H21Z" fill="#fff" /></svg>
      </Slot>
      <span className="w-[4px]" />
      <Slot run>
        <svg className="mt-[3px]" width="40" height="40" viewBox="0 0 40 40">
          <path d="M3 35L5.500 27A15.500 15.500 0 1 1 12 33Z" fill="#4fc65f" stroke="#fff" strokeWidth="2.500" />
          <path d="M12 12C14 10 15.500 12 16 15L14.500 17C16 20 18 22 21 23L23 21L27 23C26 27 22 27 19 26C14 24 10 19 11 13Z" fill="#fff" />
          <circle cx="28" cy="27" r="12" fill="#f00" />
          <path d="M28 19V29M28 31.500V34" stroke="#fff" strokeWidth="2" />
        </svg>
      </Slot>
      <Slot>
        <svg className="mr-[2px]" width="36" height="34" viewBox="0 0 36 34">
          <circle cx="19" cy="6" r="5.500" fill="#7b83eb" /><circle cx="30" cy="7.500" r="4" fill="#5059c9" />
          <path d="M25 13H35V24C35 29 28 30 25 27Z" fill="#5059c9" /><path d="M10 13H29V25C29 36 12 36 10 25Z" fill="#7b83eb" />
          <rect y="8" width="18" height="18" rx="1.500" fill="#4b53bc" />
          <text x="4.500" y="22" fontFamily="Liberation Sans" fontWeight="bold" fontSize="15" fill="#fff">T</text>
        </svg>
      </Slot>
      <Slot>
        <svg className="mr-[2px]" width="38" height="38" viewBox="0 0 38 38">
          <defs>
            <linearGradient id="ed" x1="0" y1="0" x2="1" y2=".5"><stop offset="0" stopColor="#2fb6e8" /><stop offset=".6" stopColor="#38c9b0" /><stop offset="1" stopColor="#6fdb4a" /></linearGradient>
          </defs>
          <circle cx="19" cy="19" r="18" fill="#0c6fc8" />
          <path d="M1 19C1 9 9 1 19 1C30 1 37 9 37 17C37 23 32 26 27 26C22 26 22 23 23.500 21C25 18 22 13 16 13C8 13 2 18 1 24Z" fill="url(#ed)" />
          <path d="M16 13C9 14 7 22 12 29C16 35 24 37 31 33L36 27C31 31 18 30 16 22C15.500 18 18 15 21 15C19 13.500 18 13 16 13Z" fill="#1152a0" />
          <path d="M1.200 21C3 13 11 11 16 13C9 14 7 22 12 29C14 32 17 34 20 36.900C10 37.500 1 30 1.200 21Z" fill="#1b8be0" />
          <path d="M23.500 21C25 18 22 15 20 16C16 18 16 24 20 27C23 29 30 30 37 25C33 27 22 28 23.500 21Z" fill="#101010" />
        </svg>
      </Slot>
      <Slot>
        <svg className="mr-[2px]" width="36" height="38" viewBox="0 0 36 38">
          <path d="M9 10V2H26V10" fill="none" stroke="#f1f1f1" strokeWidth="3" />
          <path d="M0 10H36V36H0Z" fill="#f4f4f4" /><path d="M0 10H36V13H0Z" fill="#d5d5d5" />
          <path d="M11 18H17.500V24.500H11Z" fill="#f35325" /><path d="M18.500 18H25V24.500H18.500Z" fill="#81bc06" /><path d="M11 25.500H17.500V32H11Z" fill="#05a6f0" /><path d="M18.500 25.500H25V32H18.500Z" fill="#ffba08" />
        </svg>
      </Slot>
      <Slot run>
        <svg className="mr-px" width="33" height="28" viewBox="0 0 33 28">
          <path d="M0 1C0 0 1 0 2 0H13L15 3H32V10H0Z" fill="#e3a008" /><path d="M0 6H12L14 3H33V26H0Z" fill="#ffd35c" />
          <path d="M5 27V16C5 15 6 14 7 14H26C27 14 28 15 28 16V27H21V21H12V27Z" fill="#3f96d8" />
        </svg>
      </Slot>
      <Slot>
        <svg className="mr-px" width="36" height="34" viewBox="0 0 36 34">
          <path d="M0 12L18 0L36 12V33H0Z" fill="#0a5db8" /><path d="M4 11H32V16L18 26L4 16Z" fill="#f2f2f2" />
          <path d="M0 12L18 23L36 33H0Z" fill="#1c9be8" /><path d="M36 12L18 23L36 33Z" fill="#37c0f5" /><path d="M0 33H36L18 22Z" fill="#1a90e0" />
        </svg>
      </Slot>
      <div className="-mr-[6px] flex h-[60px] w-[70px] flex-col bg-[#333333]">
        <div className="flex h-[57px] pl-[16px]">
          <svg className="mt-[12px]" width="37" height="36" viewBox="0 0 37 36">
            <path d="M2 8C3 3 5 1 10 0H30V30H0Z" fill="#c9d8f0" /><path d="M0 30C4 28 8 27 12 28V4C6 2 2 5 1 12Z" fill="#2d55a5" />
            <path d="M12 3L35 6L32 34L7 30Z" fill="#fbfcff" stroke="#aebbd4" strokeWidth=".700" />
            <text x="11" y="19" fontFamily="Liberation Serif" fontWeight="bold" fontStyle="italic" fontSize="15" fill="#2a4f9c">W</text>
            <path d="M26 10L32 11M26 14L31 15M25 18L31 19M11 22L31 25M11 26L30 29" stroke="#23428c" strokeWidth="2" />
          </svg>
          <i className="ml-auto h-full w-[7px] border-l-2 border-[#1d1d1d] bg-[#2a2a2a]" />
        </div>
        <i className="h-[3px] w-[70px] bg-[#76b9ed]" />
      </div>
      <span className="w-[8px]" />
      <Slot>
        <svg width="37" height="36" viewBox="0 0 37 36">
          <path d="M2 24C-1 12 8 5 18 6C30 6 34 14 32 22C30 32 16 36 14 29C13 26 16 24 13 23C9 22 5 30 2 24Z" fill="#d4e9f6" stroke="#8fb5cf" />
          <circle cx="8" cy="16" r="3" fill="#e2503c" /><circle cx="13" cy="10.500" r="2.800" fill="#7ec24b" /><circle cx="20" cy="10" r="3" fill="#f3c133" /><circle cx="27" cy="22" r="3" fill="#4a90d8" />
          <path d="M18 34L20 25L30 8L33 9L24 27Z" fill="#e88a2c" /><path d="M29 9C28 5 31 2 30 0C34 3 36 1 36 4C36 7 35 9 33 11Z" fill="#c9a06a" />
        </svg>
      </Slot>
      <Slot>
        <svg className="mr-[4px]" width="34" height="34" viewBox="0 0 34 34">
          <circle cx="17" cy="17" r="16.500" fill="#fff" />
          <path d="M17 .500A16.500 16.500 0 0 1 31.300 8.800H17A8.200 8.200 0 0 0 9.800 13L3 8.400A16.500 16.500 0 0 1 17 .500Z" fill="#e0453a" />
          <path d="M31.300 8.800A16.500 16.500 0 0 1 16.500 33.500L24.100 21.100A8.200 8.200 0 0 0 23 9Z" fill="#fbc733" />
          <path d="M3 8.400L9.900 21.100A8.200 8.200 0 0 0 20 24.500L16.500 33.500A16.500 16.500 0 0 1 3 8.400Z" fill="#2fa14f" />
          <circle cx="17" cy="17" r="7.800" fill="#fff" /><circle cx="17" cy="17" r="6.200" fill="#4285f4" />
        </svg>
      </Slot>
      <div className="ml-[41px] flex flex-1 items-center">
        <svg width="31" height="30" viewBox="0 0 31 30">
          <circle cx="14" cy="14.500" r="13.500" fill="#fdb827" /><circle cx="12" cy="12" r="9" fill="#fed154" />
          <path d="M13 25A4.500 4.500 0 0 1 13 16.500A6.500 6.500 0 0 1 25 15A5 5 0 0 1 25.500 25Z" fill="#cfe6f8" />
        </svg>
        <Fit w={43} className="ml-[13px] mt-[4px] text-[20px] leading-[28px]">35°C</Fit>
        <svg className="ml-[26px]" width="19" height="11" viewBox="0 0 19 11" fill="none" stroke="#fff" strokeWidth="1.500"><path d="M1 10L9.500 1.500L18 10" /></svg>
        <svg className="ml-[14px]" width="26" height="26" viewBox="0 0 26 26" fill="none" stroke="#fff" strokeWidth="1.400">
          <circle cx="12.500" cy="12.500" r="11" /><ellipse cx="12.500" cy="12.500" rx="5" ry="11" /><path d="M1.500 12.500H23.500M3 7H22M3 18H16M12.500 1.500V23.500" />
          <circle cx="19.500" cy="19.500" r="5" fill="#101010" /><path d="M16 16L23 23" />
        </svg>
        <svg className="ml-[11px]" width="24" height="22" viewBox="0 0 24 22" fill="none" stroke="#fff" strokeWidth="1.400">
          <path d="M1 7.500H4.500L9.500 2V20L4.500 14.500H1Z" /><path d="M12.500 8C14 10 14 12 12.500 14M15.500 5.500C18.500 9 18.500 13 15.500 16.500" /><path d="M18.500 3C23 8 23 14 18.500 19" opacity=".5" />
        </svg>
        <svg className="ml-[12px]" width="24" height="14" viewBox="0 0 24 14" fill="none" stroke="#fff" strokeWidth="1.400"><path d="M1 1H21V13H1ZM22.500 4.500V9.500" /><path d="M3 3H8V11H3Z" fill="#fff" stroke="none" /></svg>
        <Fit w={33} className="ml-[16px] mt-px text-[16.500px] leading-[26px]">ENG</Fit>
        <div className="ml-[15px] flex w-[92px] flex-col items-center pt-px">
          <Fit w={64} className="text-[17px] leading-[28px]">1:56 PM</Fit>
          <Fit w={92} className="text-[17px] leading-[28px]">10/13/2021</Fit>
        </div>
        <svg className="ml-[24px] mt-[2px]" width="25" height="26" viewBox="0 0 25 26" fill="none" stroke="#fff" strokeWidth="1.500"><path d="M1 1H24V19H16L12 24L8 19H1Z" /></svg>
        <i className="ml-auto mr-[7px] h-full w-px bg-[#6f6f6f]" />
      </div>
    </div>
  );
}

export default function App() {
  return (
    <div className="relative flex h-[1080px] w-[1920px] flex-col overflow-hidden font-['Open_Sans','Noto_Sans',sans-serif]">
      <OfficeButton />
      <TitleBar />
      <Tabs />
      <Ribbon />
      <Workspace />
      <StatusBar />
      <Taskbar />
    </div>
  );
}
